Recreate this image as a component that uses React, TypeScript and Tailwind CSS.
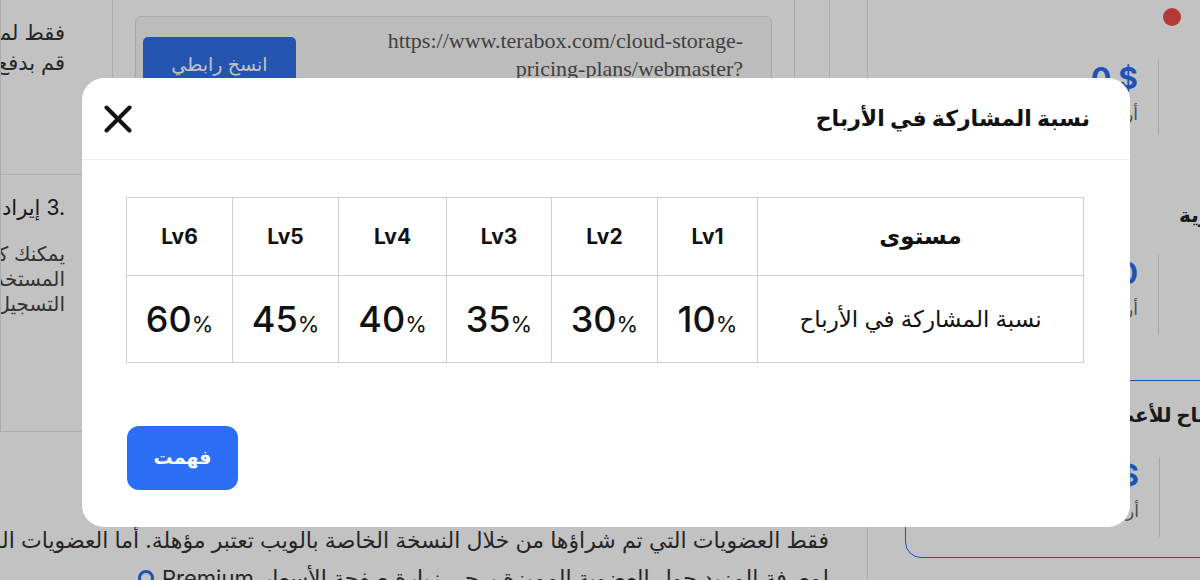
import React from 'react';

const levels = [
  { name: 'Lv1', share: '10' },
  { name: 'Lv2', share: '30' },
  { name: 'Lv3', share: '35' },
  { name: 'Lv4', share: '40' },
  { name: 'Lv5', share: '45' },
  { name: 'Lv6', share: '60' },
];

const colWidths = ['w-[100px]', 'w-[106px]', 'w-[105px]', 'w-[108px]', 'w-[106px]', 'w-[106px]'];

const StatRow: React.FC<{ value: string; label: string; className?: string }> = ({ value, label, className }) => (
  <div className={`flex ${className ?? ''}`}>
    <div className="flex w-[233px] flex-col items-end">
      <span dir="ltr" className="text-[30px] font-bold leading-[36px] text-[#2b6cf0]">{value}</span>
      <span dir="rtl" className="mt-[6px] whitespace-nowrap text-[17px] leading-[24px] text-[#666]">{label}</span>
    </div>
    <div className="ml-[20px] w-px self-stretch bg-[#dddddd]" />
    <div className="flex-1" />
  </div>
);

const Sidebar: React.FC = () => (
  <aside className="relative w-[332px] shrink-0 overflow-hidden">
    {/* notification dot */}
    <span className="absolute right-[19px] top-[8px] h-[18px] w-[18px] rounded-full bg-[#ef4b4b]" />
    <div className="flex w-[380px] flex-col pl-[37px]">
      <StatRow value="0 $" label="أرباح اليوم" className="mt-[60px] h-[75px]" />
      <h3 dir="rtl" className="ml-[274px] mt-[66px] w-max whitespace-nowrap text-[20px] font-bold leading-[28px] text-[#222]">
        الإحصائيات الشهرية
      </h3>
      <StatRow value="0" label="أرباح الشهر" className="mt-[26px] h-[80px]" />
      <div className="mt-[45px] h-[178px] w-[340px] rounded-2xl border-[1.5px] border-[#2d6ce6] pr-[20px]">
        <h3 dir="rtl" className="mt-[20px] whitespace-nowrap text-[20px] font-bold leading-[28px] text-[#222]">
          أرباح للأعضاء المميزين
        </h3>
        <StatRow value="0.00 $" label="أرباح الأمس" className="mt-[28px] h-[80px]" />
      </div>
    </div>
  </aside>
);

const LeftColumn: React.FC = () => (
  <div dir="rtl" className="flex w-[88px] shrink-0 flex-col overflow-hidden border-l border-[#e2e2e2] text-[#333]">
    <div className="h-[175px] border-b border-[#e6e6e6] pr-[23px] pt-[18px] text-[21px] leading-[30px]">
      <p className="whitespace-nowrap">فقط لمن قام بالاشتراك في العضوية</p>
      <p className="whitespace-nowrap">قم بدفع رسوم الاشتراك أولاً</p>
    </div>
    <div className="pr-[23px]">
      <div className="mt-[19px] flex items-center gap-[6px] whitespace-nowrap text-[21px] leading-[28px] text-[#222]">
        <bdi dir="ltr">3.</bdi>
        <span>إيرادات الإحالة</span>
      </div>
      <div className="mt-[20px] text-[20px] leading-[25px] text-[#444]">
        <p className="whitespace-nowrap">يمكنك كسب المزيد عند دعوة</p>
        <p className="whitespace-nowrap">المستخدمين الجدد إلى</p>
        <p className="whitespace-nowrap">التسجيل في الخدمة</p>
      </div>
    </div>
  </div>
);

const LinkPanel: React.FC = () => (
  <div className="w-[683px] shrink-0 border-x border-[#e2e2e2] px-[22px] pt-[16px]">
    <div className="flex h-[120px] items-start justify-between rounded-md border border-[#dedede] bg-[#f8f8f8] pl-[7px] pr-[28px]">
      <button className="mt-[20px] h-[60px] w-[153px] rounded-[5px] bg-[#2f6fe6] pb-[4px] text-[19px] text-white">
        انسخ رابطي
      </button>
      <p className="mt-[10px] text-right font-['Liberation_Serif',serif] text-[22px] leading-[28px] text-[#555]">
        https://www.terabox.com/cloud-storage-
        <br />
        pricing-plans/webmaster?
      </p>
    </div>
  </div>
);

const CloseIcon: React.FC = () => (
  <svg width="28" height="28" viewBox="0 0 28 28" fill="none" stroke="#111" strokeWidth="4" strokeLinecap="round">
    <path d="M2.5 2.5 L25.5 25.5" />
    <path d="M25.5 2.5 L2.5 25.5" />
  </svg>
);

const ShareModal: React.FC = () => (
  <div className="absolute inset-0 bg-black/[0.24]">
    <div dir="rtl" className="absolute left-[82px] top-[78px] flex h-[449px] w-[1048px] flex-col rounded-[22px] bg-white text-[#111]">
      <div className="flex h-[82px] shrink-0 items-center justify-between border-b border-[#ededed] pl-[22px] pr-[40px]">
        <h2 className="text-[22px] font-bold">نسبة المشاركة في الأرباح</h2>
        <button aria-label="close" className="flex h-[28px] w-[28px] items-center justify-center">
          <CloseIcon />
        </button>
      </div>

      <div className="pr-[46px] pt-[37px]">
        <table className="w-[957px] table-fixed border-collapse text-center">
          <colgroup>
            <col className="w-[326px]" />
            {colWidths.map((w, i) => (
              <col key={i} className={w} />
            ))}
          </colgroup>
          <tbody>
            <tr className="h-[78px]">
              <td className="border border-[#cfcfcf] text-[23px] font-semibold">مستوى</td>
              {levels.map((l) => (
                <td key={l.name} className="border border-[#cfcfcf] text-[21px] font-bold">
                  {l.name}
                </td>
              ))}
            </tr>
            <tr className="h-[87px]">
              <td className="border border-[#cfcfcf] text-[23px] font-medium">نسبة المشاركة في الأرباح</td>
              {levels.map((l) => (
                <td key={l.name} className="border border-[#cfcfcf]">
                  <span dir="ltr" className="inline-flex items-baseline">
                    <span className="text-[36px] font-medium">{l.share}</span>
                    <span className="text-[22px]">%</span>
                  </span>
                </td>
              ))}
            </tr>
          </tbody>
        </table>
      </div>

      <div className="mt-[63px] flex justify-end pl-[45px]">
        <button className="h-[64px] w-[111px] rounded-[12px] bg-[#2c6ef5] text-[19px] font-bold text-white">
          فهمت
        </button>
      </div>
    </div>
  </div>
);

export default function App() {
  return (
    <div className="relative h-[580px] w-[1200px] overflow-hidden bg-white font-['Inter','DejaVu_Sans',sans-serif]">
      <div className="flex h-full">
        <main className="flex w-[868px] shrink-0 flex-col border-r border-[#e2e2e2]">
          <div className="flex h-[432px] shrink-0 border-b border-[#e2e2e2]">
            <LeftColumn />
            <div className="w-[24px] shrink-0" />
            <LinkPanel />
            <div className="w-[35px] shrink-0 border-r border-[#e6e6e6]" />
          </div>
          <div dir="rtl" className="overflow-hidden pr-[38px] pt-[89px] text-[22px] leading-[38px] text-[#333]">
            <p className="whitespace-nowrap">
              فقط العضويات التي تم شراؤها من خلال النسخة الخاصة بالويب تعتبر مؤهلة. أما العضويات المشتراة عبر التطبيق فلا تحتسب.
            </p>
            <div className="flex items-center gap-[8px] whitespace-nowrap">
              <span>لمعرفة المزيد حول العضوية المميزة يرجى زيارة صفحة الأسعار</span>
              <span dir="ltr">Premium</span>
              <span className="h-[16px] w-[16px] shrink-0 rounded-full border-[3px] border-[#2b6cf0]" />
            </div>
          </div>
        </main>
        <Sidebar />
      </div>
      <ShareModal />
    </div>
  );
}
